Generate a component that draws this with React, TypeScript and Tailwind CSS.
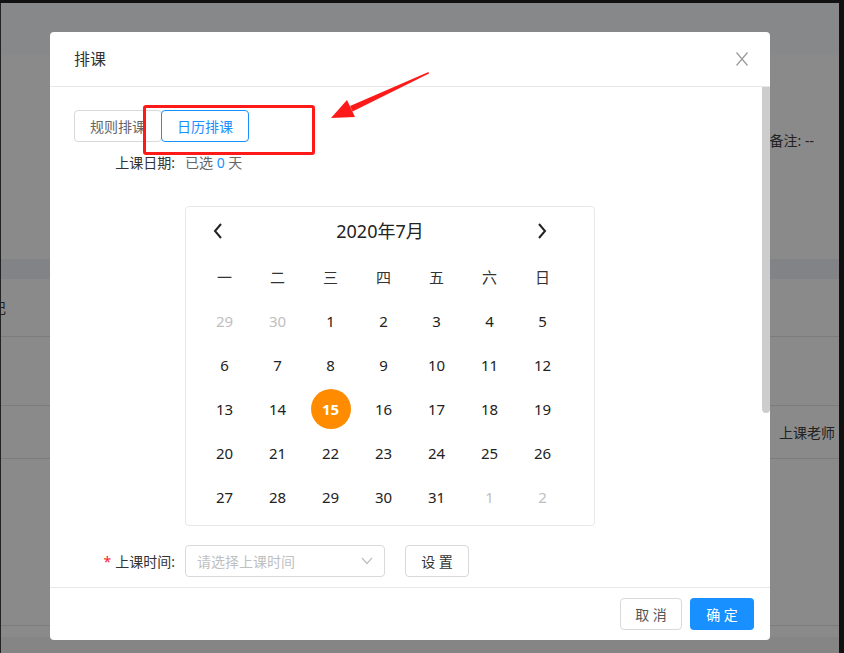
import React from "react";

const font = { fontFamily: '"Noto Sans", "Noto Sans CJK SC", sans-serif' };

function Calendar() {
  const weeks = ["一", "二", "三", "四", "五", "六", "日"];
  const rows: { d: number; muted?: boolean; sel?: boolean }[][] = [
    [{ d: 29, muted: true }, { d: 30, muted: true }, { d: 1 }, { d: 2 }, { d: 3 }, { d: 4 }, { d: 5 }],
    [{ d: 6 }, { d: 7 }, { d: 8 }, { d: 9 }, { d: 10 }, { d: 11 }, { d: 12 }],
    [{ d: 13 }, { d: 14 }, { d: 15, sel: true }, { d: 16 }, { d: 17 }, { d: 18 }, { d: 19 }],
    [{ d: 20 }, { d: 21 }, { d: 22 }, { d: 23 }, { d: 24 }, { d: 25 }, { d: 26 }],
    [{ d: 27 }, { d: 28 }, { d: 29 }, { d: 30 }, { d: 31 }, { d: 1, muted: true }, { d: 2, muted: true }],
  ];
  return (
    <div className="w-[410px] h-[320px] border border-[#e8e8e8] rounded-[4px] ml-[111px] mt-[34px]">
      <div className="h-[48px] ml-[26px] w-[336px] flex items-center justify-between">
        <svg width="12" height="18" viewBox="0 0 12 18">
          <path d="M9 2 L3 9 L9 16" fill="none" stroke="#222" strokeWidth="2" />
        </svg>
        <span className="text-[18px] text-[#222] leading-none">2020年7月</span>
        <svg width="12" height="18" viewBox="0 0 12 18">
          <path d="M3 2 L9 9 L3 16" fill="none" stroke="#222" strokeWidth="2" />
        </svg>
      </div>
      <div className="pl-[12px]">
        <div className="flex h-[44px] items-center">
          {weeks.map((w) => (
            <div key={w} className="w-[53px] text-center text-[15px] text-[#333]">
              {w}
            </div>
          ))}
        </div>
        {rows.map((r, i) => (
          <div key={i} className="flex h-[44px] items-center">
            {r.map((c, j) => (
              <div key={j} className="w-[53px] flex justify-center items-center">
                {c.sel ? (
                  <div className="w-[40px] h-[40px] rounded-full bg-[#ff8c00] text-white font-bold text-[15px] flex items-center justify-center">
                    {c.d}
                  </div>
                ) : (
                  <span className={"text-[15px] " + (c.muted ? "text-[#c0c0c0]" : "text-[#222]")}>{c.d}</span>
                )}
              </div>
            ))}
          </div>
        ))}
      </div>
    </div>
  );
}

export default function App() {
  return (
    <div className="relative w-[844px] h-[653px] overflow-hidden bg-[#8a8a8a]" style={font}>
      {/* background page */}
      <div className="h-[3px] bg-[#111]" />
      <div className="flex h-[650px]">
        <div className="w-[1px] bg-[#222]" />
        <div className="flex-1 flex flex-col">
          <div className="h-[52px] bg-[#87888a]" />
          <div className="h-[204px] flex justify-end pr-[25px] pt-[76px]">
            <span className="text-[14px] text-[#222] leading-[20px]">备注: --</span>
          </div>
          <div className="h-[20px] bg-[#828386]" />
          <div className="h-[58px] border-b border-[#7c7c7c] flex items-center pl-0">
            <span className="text-[14px] text-[#222] -ml-[9px]">记</span>
          </div>
          <div className="h-[69px] border-b border-[#7c7c7c]" />
          <div className="h-[53px] border-b border-[#7c7c7c] flex items-center justify-end pr-[4px]">
            <span className="text-[14px] text-[#222]">上课老师</span>
          </div>
          <div className="h-[167px] border-b border-[#7c7c7c]" />
          <div className="h-[11px]" />
          <div className="flex-1 bg-[#858585]" />
        </div>
        <div className="w-[5px] bg-[#111]" />
      </div>

      {/* modal */}
      <div className="absolute left-[50px] top-[32px] w-[720px] h-[608px] bg-white rounded-[4px] flex flex-col overflow-hidden">
        <div className="h-[55px] shrink-0 border-b border-[#e8e8e8] flex items-center justify-between pl-[24px] pr-[22px]">
          <span className="text-[16px] text-[#333]">排课</span>
          <svg width="12" height="14" viewBox="0 0 12 14">
            <path d="M0.5 0.5 L11.5 13.5 M11.5 0.5 L0.5 13.5" stroke="#9a9a9a" strokeWidth="1.2" fill="none" />
          </svg>
        </div>
        <div className="flex-1 flex overflow-hidden">
          <div className="flex-1 pt-[23px] pl-[24px] overflow-hidden">
            <div className="flex h-[32px]">
              <div className="w-[88px] h-[32px] border border-[#d9d9d9] rounded-[4px] flex items-center justify-center text-[14px] text-[#666]">
                规则排课
              </div>
              <div className="relative z-10 -ml-[1px] w-[88px] h-[32px] border border-[#1890ff] rounded-[4px] bg-white flex items-center justify-center text-[14px] text-[#1890ff]">
                日历排课
              </div>
            </div>
            <div className="flex mt-[10px] h-[20px] items-center text-[14px]">
              <div className="w-[101px] text-right text-[#333]">上课日期:</div>
              <div className="ml-[10px] text-[#666]">
                已选 <span className="text-[#1890ff]">0</span> 天
              </div>
            </div>
            <Calendar />
            <div className="flex items-center mt-[19px] text-[14px]">
              <div className="w-[101px] text-right text-[#333]">
                <span className="text-[#f5222d] mr-[4px]">*</span>上课时间:
              </div>
              <div className="ml-[10px] w-[200px] h-[32px] border border-[#d9d9d9] rounded-[4px] flex items-center justify-between pl-[11px] pr-[11px]">
                <span className="text-[#bfbfbf]">请选择上课时间</span>
                <svg width="12" height="8" viewBox="0 0 12 8">
                  <path d="M1 1 L6 6.5 L11 1" fill="none" stroke="#bfbfbf" strokeWidth="1.2" />
                </svg>
              </div>
              <div className="ml-[20px] w-[64px] h-[32px] border border-[#d9d9d9] rounded-[4px] flex items-center justify-center text-[#333]">
                设 置
              </div>
            </div>
          </div>
          <div className="w-[8px] shrink-0">
            <div className="w-[8px] h-[326px] bg-[#cdcdcd] rounded-b-[4px]" />
          </div>
        </div>
        <div className="h-[53px] shrink-0 border-t border-[#e8e8e8] flex items-center justify-end pr-[16px] gap-[8px]">
          <div className="w-[62px] h-[32px] border border-[#d9d9d9] rounded-[4px] flex items-center justify-center text-[14px] text-[#555]">
            取 消
          </div>
          <div className="w-[64px] h-[32px] bg-[#1890ff] rounded-[4px] flex items-center justify-center text-[14px] text-white">
            确 定
          </div>
        </div>
      </div>

      {/* annotation */}
      <div className="absolute left-[143px] top-[105px] w-[172px] h-[50px] border-[3px] border-[#ff1a1a] rounded-[3px] pointer-events-none" />
      <svg className="absolute left-0 top-0 pointer-events-none" width="844" height="653">
        <polygon points="428.5,72 429,73.5 352.5,111.5 350,106" fill="#ff1a1a" />
        <polygon points="331,118 347,100 355,117" fill="#ff1a1a" />
      </svg>
    </div>
  );
}
